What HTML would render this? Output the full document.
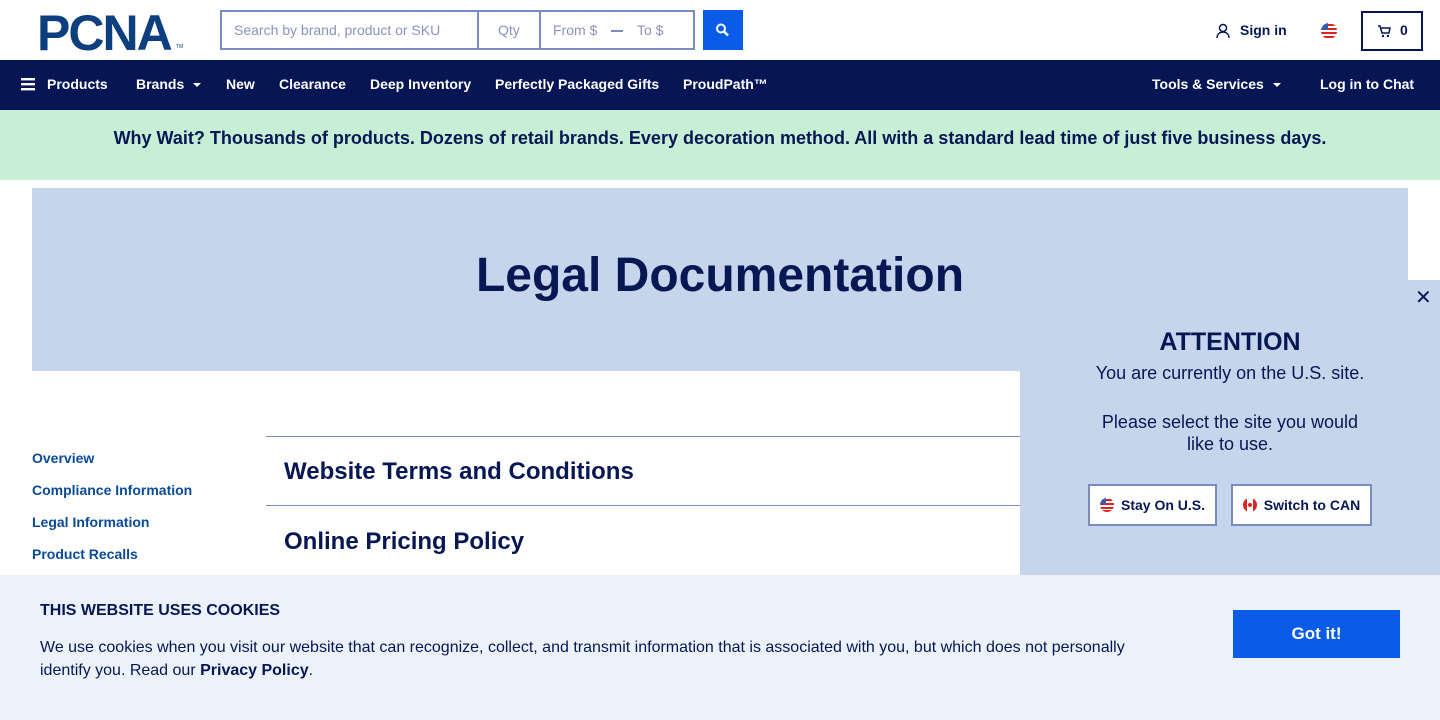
<!DOCTYPE html>
<html><head><meta charset="utf-8"><style>
*{box-sizing:border-box;margin:0;padding:0}
body{width:1440px;height:720px;overflow:hidden;position:relative;font-family:"Liberation Sans",Arial,sans-serif;background:#fff;color:#071754}
.abs{position:absolute}
.nav{top:60px;left:0;width:1440px;height:50px;background:#061654;color:#fff;font-weight:bold;font-size:14px}
.nav span{position:absolute;top:16px;white-space:nowrap}
.caret{display:inline-block;width:0;height:0;border-left:4px solid transparent;border-right:4px solid transparent;border-top:4px solid #fff;margin-left:9px;vertical-align:middle}
.side a{position:absolute;left:32px;color:#0a4a96;font-size:14px;font-weight:bold;text-decoration:none}
.btn{position:absolute;top:484px;height:42px;border:2px solid #7b8bc0;background:#fff;font-weight:bold;font-size:14px;display:flex;align-items:center;justify-content:center;gap:7px}
</style></head><body>
<div class="abs" style="left:37px;top:8px;font-size:50px;line-height:50px;font-weight:900;color:#0d3f7e;letter-spacing:-2px">PCNA</div>
<div class="abs" style="left:176px;top:44px;font-size:5px;color:#0d3f7e">TM</div>
<div class="abs" style="left:220px;top:10px;width:475px;height:40px;border:2px solid #7b8bc0"></div>
<div class="abs" style="left:477px;top:10px;width:2px;height:40px;background:#7b8bc0"></div>
<div class="abs" style="left:539px;top:10px;width:2px;height:40px;background:#7b8bc0"></div>
<div class="abs" style="left:234px;top:22px;font-size:14px;color:#8a93bb">Search by brand, product or SKU</div>
<div class="abs" style="left:498px;top:22px;font-size:14px;color:#8a93bb">Qty</div>
<div class="abs" style="left:553px;top:22px;font-size:14px;color:#8a93bb">From $</div>
<div class="abs" style="left:611px;top:30px;width:12px;height:2px;background:#7b8bc0"></div>
<div class="abs" style="left:637px;top:22px;font-size:14px;color:#8a93bb">To $</div>
<div class="abs" style="left:703px;top:10px;width:40px;height:40px;background:#0a5ce8"><svg width="40" height="40"><circle cx="18" cy="18.5" r="4" fill="none" stroke="#fff" stroke-width="2"/><path d="M21 21.5l4 4" stroke="#fff" stroke-width="2.5"/></svg></div>
<svg class="abs" style="left:1215px;top:23px" width="16" height="16"><circle cx="8" cy="5" r="3.5" fill="none" stroke="#071754" stroke-width="1.5"/><path d="M2 15c0-4 3-6 6-6s6 2 6 6" fill="none" stroke="#071754" stroke-width="1.5"/></svg>
<div class="abs" style="left:1240px;top:22px;font-size:14px;font-weight:bold">Sign in</div>
<svg class="abs" style="left:1321px;top:23px" width="16" height="16"><clipPath id="c"><circle cx="8" cy="8" r="8"/></clipPath><g clip-path="url(#c)"><rect width="16" height="16" fill="#fff"/><rect y="1" width="16" height="2" fill="#d22"/><rect y="5" width="16" height="2" fill="#d22"/><rect y="9" width="16" height="2" fill="#d22"/><rect y="13" width="16" height="2" fill="#d22"/><rect width="7" height="7" fill="#3a5bb0"/></g></svg>
<div class="abs" style="left:1361px;top:11px;width:62px;height:40px;border:2px solid #071754"></div>
<svg class="abs" style="left:1377px;top:24px" width="14" height="14"><path d="M1 2h2l2 7h7l1-5H4" fill="none" stroke="#071754" stroke-width="1.5"/><circle cx="6" cy="12" r="1.2" fill="#071754"/><circle cx="11" cy="12" r="1.2" fill="#071754"/></svg>
<div class="abs" style="left:1400px;top:22px;font-size:14px;font-weight:bold">0</div>
<div class="abs nav">
<svg style="position:absolute;left:21px;top:18px" width="14" height="13"><rect width="14" height="2.4" fill="#fff"/><rect y="5" width="14" height="2.4" fill="#fff"/><rect y="10" width="14" height="2.4" fill="#fff"/></svg>
<span style="left:47px">Products</span>
<span style="left:136px">Brands<i class="caret"></i></span>
<span style="left:226px">New</span>
<span style="left:279px">Clearance</span>
<span style="left:370px">Deep Inventory</span>
<span style="left:495px">Perfectly Packaged Gifts</span>
<span style="left:683px">ProudPath™</span>
<span style="left:1152px">Tools &amp; Services<i class="caret"></i></span>
<span style="left:1320px">Log in to Chat</span>
</div>
<div class="abs" style="top:110px;left:0;width:1440px;height:70px;background:#c6efd6;text-align:center;padding-top:18px;font-size:18px;font-weight:bold">Why Wait? Thousands of products. Dozens of retail brands. Every decoration method. All with a standard lead time of just five business days.</div>
<div class="abs" style="top:188px;left:32px;width:1376px;height:183px;background:#c5d5ec;text-align:center;padding-top:60px;font-size:48px;font-weight:bold">Legal Documentation</div>
<div class="side"><a style="top:450px">Overview</a><a style="top:482px">Compliance Information</a><a style="top:514px">Legal Information</a><a style="top:546px">Product Recalls</a></div>
<div class="abs" style="left:266px;top:436px;width:760px;height:1px;background:#7b8bc0"></div>
<div class="abs" style="left:266px;top:505px;width:760px;height:1px;background:#7b8bc0"></div>
<div class="abs" style="left:284px;top:458px;font-size:24px;font-weight:bold">Website Terms and Conditions</div>
<div class="abs" style="left:284px;top:528px;font-size:24px;font-weight:bold">Online Pricing Policy</div>
<div class="abs" style="left:1020px;top:280px;width:420px;height:295px;background:#c5d5ec"></div>
<div class="abs" style="left:1415px;top:285px;font-size:20px">✕</div>
<div class="abs" style="left:1020px;top:328px;width:420px;text-align:center;font-size:25px;font-weight:bold">ATTENTION</div>
<div class="abs" style="left:1020px;top:362px;width:420px;text-align:center;font-size:18px;line-height:22px">You are currently on the U.S. site.</div>
<div class="abs" style="left:1020px;top:411px;width:420px;text-align:center;font-size:18px;line-height:22px">Please select the site you would<br>like to use.</div>
<div class="btn" style="left:1088px;width:129px"><svg width="14" height="14"><clipPath id="d"><circle cx="7" cy="7" r="7"/></clipPath><g clip-path="url(#d)"><rect width="14" height="14" fill="#fff"/><rect y="1" width="14" height="2" fill="#d22"/><rect y="5" width="14" height="2" fill="#d22"/><rect y="9" width="14" height="2" fill="#d22"/><rect y="12" width="14" height="2" fill="#d22"/><rect width="6" height="6" fill="#3a5bb0"/></g></svg>Stay On U.S.</div>
<div class="btn" style="left:1231px;width:141px"><svg width="14" height="14"><clipPath id="e"><circle cx="7" cy="7" r="7"/></clipPath><g clip-path="url(#e)"><rect width="14" height="14" fill="#fff"/><rect width="4" height="14" fill="#d22"/><rect x="10" width="4" height="14" fill="#d22"/><circle cx="7" cy="7" r="2" fill="#d22"/></g></svg>Switch to CAN</div>
<div class="abs" style="left:0;top:575px;width:1440px;height:145px;background:#ebf2fa"></div>
<div class="abs" style="left:40px;top:602px;font-size:16px;font-weight:bold">THIS WEBSITE USES COOKIES</div>
<div class="abs" style="left:40px;top:636px;width:1110px;font-size:16px;line-height:23px">We use cookies when you visit our website that can recognize, collect, and transmit information that is associated with you, but which does not personally identify you. Read our <b>Privacy Policy</b>.</div>
<div class="abs" style="left:1233px;top:610px;width:167px;height:48px;background:#0a5ce8;color:#fff;font-weight:bold;font-size:17px;text-align:center;line-height:48px">Got it!</div>
</body></html>
